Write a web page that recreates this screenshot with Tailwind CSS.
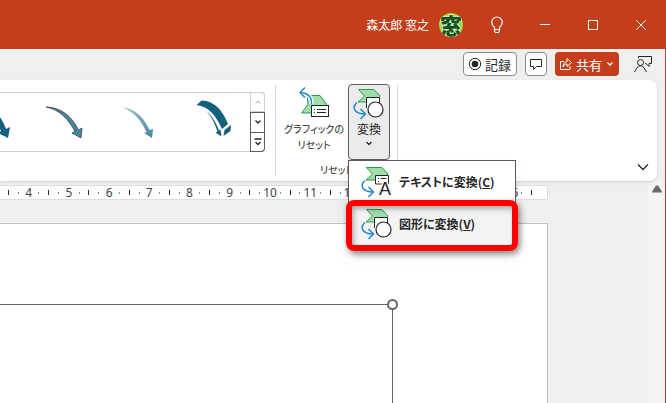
<!DOCTYPE html>
<html lang="ja">
<head>
  <meta charset="utf-8">
  <meta name="viewport" content="width=device-width, initial-scale=1">
  <title>PowerPoint</title>
  <script src="https://cdn.jsdelivr.net/npm/@tailwindcss/browser@4"></script>
</head>
<body class="h-dvh flex flex-col overflow-hidden bg-[#efefef] border-r border-[#c43e1c] text-[#262626] text-xs font-['Noto_Sans','Noto_Sans_CJK_JP',sans-serif]">

  <!-- title bar -->
  <header class="shrink-0 h-[49px] bg-[#c43e1c] text-white flex items-center justify-end">
    <span class="mr-[10px] leading-6 font-['Noto_Sans_CJK_JP',sans-serif]">森太郎 窓之</span>
    <svg class="size-6 mr-[10px]" viewBox="0 0 24 24" role="img" aria-label="アカウント">
      <clipPath id="face"><circle cx="12" cy="12" r="12" /></clipPath>
      <g clip-path="url(#face)">
        <rect width="24" height="24" fill="#a3d62a" />
        <text x="12" y="20.500" text-anchor="middle" font-size="22" font-weight="900" fill="#164f1c" stroke="#c5e3b0" stroke-width="2.500" paint-order="stroke" font-family="Noto Sans CJK JP, sans-serif">窓</text>
      </g>
    </svg>
    <button class="w-12 h-full flex items-center justify-center" aria-label="ヒント">
      <svg class="w-4 h-5" viewBox="0 0 16 20" fill="none" stroke="currentColor" stroke-width="1.200">
        <path d="M5.500 14.500v-2C4 11 2.700 9.500 2.700 7.300a5.300 5.300 0 0 1 10.600 0c0 2.200-1.300 3.700-2.800 5.200v2zM5.500 14.500v1.500l1 1.500h3l1-1.500v-1.500" />
      </svg>
    </button>
    <button class="w-12 h-full flex items-center justify-center" aria-label="最小化">
      <svg class="size-3" viewBox="0 0 12 12" stroke="currentColor"><path d="M1 5.500h10" /></svg>
    </button>
    <button class="w-12 h-full flex items-center justify-center" aria-label="最大化">
      <svg class="size-3" viewBox="0 0 12 12" fill="none" stroke="currentColor"><rect x="1.500" y="1.500" width="9" height="9" /></svg>
    </button>
    <button class="w-12 h-full flex items-center justify-center" aria-label="閉じる">
      <svg class="size-3" viewBox="0 0 12 12" stroke="currentColor"><path d="M1 1l10 10M11 1L1 11" /></svg>
    </button>
  </header>

  <!-- tab row, right side -->
  <div class="shrink-0 h-[31px] flex items-center justify-end gap-2 pb-px pr-3 font-['Noto_Sans_CJK_JP',sans-serif]">
    <button class="h-6 px-1 flex items-center gap-[3px] rounded-sm border border-[#8a8a8a] bg-white text-[13px] leading-none">
      <svg class="size-[14px]" viewBox="0 0 14 14"><circle cx="7" cy="7" r="5.700" fill="none" stroke="#262626" /><circle cx="7" cy="7" r="3.300" fill="#262626" /></svg>
      <span class="pr-[1px]">記録</span>
    </button>
    <button class="h-6 w-[22px] flex items-center justify-center rounded-sm border border-[#8a8a8a] bg-white" aria-label="コメント">
      <svg class="size-3" viewBox="0 0 12 12" fill="none" stroke="#262626"><path d="M.5 1.500h11v7h-5l-3 3v-3h-3z" /></svg>
    </button>
    <button class="h-6 w-16 flex items-center justify-center gap-1 rounded-sm bg-[#c43e1c] text-white text-[13px] leading-none">
      <svg class="size-3 shrink-0" viewBox="0 0 12 12" fill="none" stroke="currentColor"><path d="M4 3.500H.5v8h9.500V8M7 .5l4.500 4L7 8.500V6C5 6 4 7 3 9c0-3 1.500-5 4-5.500z" /></svg>
      共有
      <svg class="size-2 shrink-0" viewBox="0 0 8 8" fill="none" stroke="currentColor" stroke-width="1.300"><path d="M1.500 2.500L4 5l2.500-2.500" /></svg>
    </button>
    <button class="ml-[6px] w-5 h-6 flex items-center justify-center" aria-label="発表者">
      <svg class="size-[18px]" viewBox="0 0 18 18" fill="none" stroke="#262626">
        <circle cx="6.500" cy="7.500" r="3" />
        <path d="M.5 17l3-5c1.500-1.500 4.500-1.500 6 0l3 5M4.500 3V1.500h13v7h-2.500v3l-3-3h-1" />
      </svg>
    </button>
  </div>

  <!-- ribbon -->
  <section class="relative z-10 shrink-0 h-[101px] mr-2 bg-white rounded-r-lg shadow flex items-start">
    <!-- style gallery -->
    <div class="mt-3 h-[60px] min-w-0 w-[265px] flex rounded-r border border-l-0 border-[#d0d0d0]">
      <div class="flex-1 min-w-0 flex justify-end overflow-hidden">
        <svg class="w-[72px] h-[58px] shrink-0" viewBox="0 0 72 58" fill="#14607f"><path d="M14 10C28 12 38 20 44 36l4-2-2 11-10-5 3-2C33 26 25 18 14 10z" /></svg>
        <svg class="w-[72px] h-[58px] shrink-0" viewBox="0 0 72 58" fill="#4386a3" stroke="#3b4147" stroke-width=".8"><path d="M12 14C26 14 38 23 44.500 37l3.500-2-1 10-9-5 3-1.500C35 27 26 16.500 12 14z" /></svg>
        <svg class="w-[72px] h-[58px] shrink-0" viewBox="0 0 72 58">
          <linearGradient id="fade" x2="1" y2="1"><stop stop-color="#a7c5d4" /><stop offset="1" stop-color="#4783a3" /></linearGradient>
          <path fill="url(#fade)" d="M16 14C29 16 37 23 43.500 37l3.500-1-1 9-8-5 2.500-1C35 27 27 18 16 14z" />
        </svg>
        <svg class="w-[72px] h-[58px] shrink-0" viewBox="0 0 72 58" fill="#14607f">
          <path d="M18.500 12l5-4.500C37 8 45 18 50 31l-6 5C38 23 31 13.500 18.500 12z" />
          <path d="M46.500 37l6.500-5-.5 6-7 5z" />
          <path d="M28 17.500c6 5 10 12 13 20l1.500-1 1 7-6-4 2-1C37 31 34 24 28 17.500z" />
        </svg>
      </div>
      <div class="-my-px -mr-px w-[15px] shrink-0 flex flex-col">
        <button class="flex-1 flex items-center justify-center rounded-tr border border-[#d0d0d0] text-[#b0b0b0]" aria-label="上へ">
          <svg class="size-2" viewBox="0 0 8 8" fill="none" stroke="currentColor"><path d="M1.500 5.500L4 3l2.500 2.500" /></svg>
        </button>
        <button class="flex-1 flex items-center justify-center border border-[#5c5c5c]" aria-label="下へ">
          <svg class="size-2" viewBox="0 0 8 8" fill="none" stroke="currentColor" stroke-width="1.300"><path d="M1.500 2.500L4 5l2.500-2.500" /></svg>
        </button>
        <button class="flex-1 flex items-center justify-center rounded-br border border-t-0 border-[#5c5c5c]" aria-label="その他">
          <svg class="size-2" viewBox="0 0 8 8" fill="none" stroke="currentColor" stroke-width="1.300"><path d="M.5 1h7M1.500 4L4 6.500 6.500 4" /></svg>
        </button>
      </div>
    </div>

    <!-- reset group -->
    <div class="mt-[5px] ml-[10px] h-[91px] w-[123px] shrink-0 border-x border-[#d6d6d6] flex flex-col items-center font-['Noto_Sans_CJK_JP',sans-serif] [font-feature-settings:'palt']">
      <div class="-mt-px self-stretch flex justify-between pl-[5px] pr-[7px]">
        <button class="h-[76px] w-[66px] flex flex-col items-center pt-[2px] text-[10px] leading-4">
          <svg class="size-8 mr-px mb-[3px] shrink-0" viewBox="0 0 32 32" fill="none">
            <path d="M9 9.500h13l7 9.500-7 8H3.500L10 18.500z" fill="#a1dcab" stroke="#2f9a4c" />
            <path d="M13.500 18C14 10 9 7 2 6.500M7 1.500l-5 5 5 5" stroke="#fff" stroke-width="4" />
            <path d="M13.500 18C14 10 9 7 2 6.500M7 1.500l-5 5 5 5" stroke="#2488d0" stroke-width="1.500" />
            <rect x="13.500" y="19.500" width="17" height="11" fill="#fff" stroke="#262626" />
            <path d="M16 23.500h1M19 23.500h9M16 26.500h1M19 26.500h9" stroke="#262626" />
          </svg>
          <span class="whitespace-nowrap">グラフィックの<br>リセット</span>
        </button>
        <div class="relative">
          <button class="h-[76px] w-[42px] flex flex-col items-center pt-[3px] rounded border border-[#5c5c5c] bg-[#ebebeb] leading-4" aria-haspopup="menu" aria-expanded="true">
            <svg class="size-8 shrink-0 mb-px" viewBox="0 0 32 32" fill="none">
              <path d="M5.500 1.500H21l6 6.500-6 6H5l6.500-6z" fill="#a1dcab" stroke="#2f9a4c" />
              <path d="M13.500 20V9.500h13V18" fill="#fff" stroke="#262626" />
              <circle cx="22.500" cy="21.500" r="7.500" fill="#fff" stroke="#262626" stroke-width="1.200" />
              <path d="M4 14.500C-1.500 19 1 26 12 26M7.500 21l5 5-5 5" stroke="#2488d0" stroke-width="1.500" />
            </svg>
            変換
            <svg class="size-2 mt-[3px]" viewBox="0 0 8 8" fill="none" stroke="currentColor" stroke-width="1.300"><path d="M1.500 2L4 4.500 6.500 2" /></svg>
          </button>

          <!-- convert drop-down -->
          <div role="menu" class="absolute left-0 top-[76px] w-[168px] bg-white border border-[#5c5c5c] shadow-lg text-xs font-bold">
            <button role="menuitem" class="w-full h-[42px] pl-3 flex items-center gap-[6px] whitespace-nowrap">
              <svg class="size-8 shrink-0" viewBox="0 0 32 32" fill="none">
                <path d="M5.500 1.500H21l6 6.500-6 6H5l6.500-6z" fill="#a1dcab" stroke="#2f9a4c" />
                <path d="M14.500 18V9.500h13V18z" fill="#fff" stroke="#262626" />
                <path d="M17 12.500h1M19.500 12.500h6M17 15.500h1" stroke="#262626" />
                <text x="24" y="29" text-anchor="middle" font-size="18" font-weight="400" fill="#262626" stroke="#fff" stroke-width="3" paint-order="stroke" font-family="Liberation Sans, sans-serif">A</text>
                <path d="M4 14.500C-1.500 19 1 26 12 26M7.500 21l5 5-5 5" stroke="#2488d0" stroke-width="1.500" />
              </svg>
              <span>テキストに変換(<u>C</u>)</span>
            </button>
            <button role="menuitem" class="relative w-full h-[42px] pl-3 flex items-center gap-[6px] bg-[#f3f3f3] whitespace-nowrap">
              <svg class="size-8 shrink-0" viewBox="0 0 32 32" fill="none">
                <path d="M5.500 1.500H21l6 6.500-6 6H5l6.500-6z" fill="#a1dcab" stroke="#2f9a4c" />
                <path d="M13.500 20V9.500h13V18" fill="#fff" stroke="#262626" />
                <circle cx="22.500" cy="21.500" r="7.500" fill="#fff" stroke="#262626" stroke-width="1.200" />
                <path d="M4 14.500C-1.500 19 1 26 12 26M7.500 21l5 5-5 5" stroke="#2488d0" stroke-width="1.500" />
              </svg>
              <span>図形に変換(<u>V</u>)</span>
              <!-- call-out frame -->
              <span class="absolute -inset-x-[3px] -top-[3px] -bottom-[6px] rounded-lg border-6 border-[#ff0000] shadow-[2px_3px_6px_rgb(0_0_0/0.45),inset_2px_3px_5px_rgb(0_0_0/0.3)]"></span>
            </button>
          </div>
        </div>
      </div>
      <span class="mt-[2px] text-[10px] leading-4">リセット</span>
    </div>

    <button class="ml-auto mr-2 mb-2 self-end" aria-label="リボンの表示オプション">
      <svg class="size-3" viewBox="0 0 12 12" fill="none" stroke="currentColor" stroke-width="1.300"><path d="M1 3.500l5 5 5-5" /></svg>
    </button>
  </section>

  <!-- editing area -->
  <main class="flex-1 min-h-0 flex">
    <div class="flex-1 min-w-0 pr-[100px] pt-1 flex flex-col">
      <div class="h-[15px] shrink-0 pl-[8px] pr-[15px] flex items-center bg-white border border-l-0 border-[#dedede] text-[#444] text-xs leading-none">
        <div id="ruler" class="flex-1 flex"></div>
        <i class="w-px h-[5px] bg-[#262626]"></i>
      </div>
      <!-- slide -->
      <div class="mt-[23px] flex-1 flex flex-col bg-white border-t border-r border-[#c0c0c0]">
        <div class="relative mt-20 mr-[154px] flex-1 border-t border-r border-[#666]">
          <span class="absolute -top-[6px] -right-[6px] size-[11px] rounded-full border-2 border-[#666] bg-white"></span>
        </div>
      </div>
    </div>
    <div class="w-[17px] shrink-0 rounded-t-lg bg-[#f4f4f4] flex flex-col items-center pt-1">
      <svg class="w-[10px] h-2" viewBox="0 0 10 8" fill="#6b6b6b"><path d="M4 .5h2l4 6v1H0v-1z" /></svg>
    </div>
  </main>

  <script>
    // one ruler cell per centimetre: half tick, quarter dot, number, quarter dot
    const ruler = document.getElementById('ruler');
    for (let cm = 4; cm <= 16; cm++) {
      ruler.insertAdjacentHTML('beforeend', `
        <div class="flex-1 min-w-0 flex items-center justify-between">
          <i class="w-px h-[5px] bg-[#262626]"></i>
          <i class="w-px h-[2px] bg-[#888]"></i>
          <span class="w-[2px] flex justify-center">${cm}</span>
          <i class="w-px h-[2px] bg-[#888]"></i>
          <i class="w-0"></i>
        </div>`);
    }
  </script>
</body>
</html>
